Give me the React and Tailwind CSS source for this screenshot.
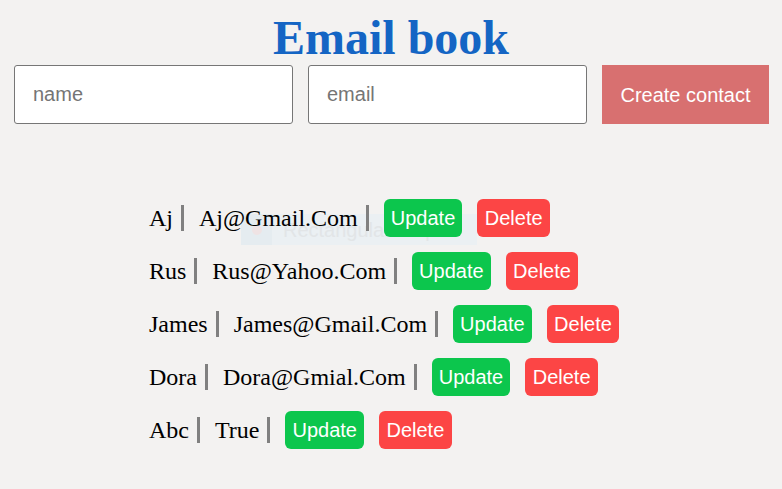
import React, { useState } from 'react'

const initialContacts = [
  { name: 'Aj', email: 'Aj@Gmail.Com' },
  { name: 'Rus', email: 'Rus@Yahoo.Com' },
  { name: 'James', email: 'James@Gmail.Com' },
  { name: 'Dora', email: 'Dora@Gmial.Com' },
  { name: 'Abc', email: 'True' },
]

const ContactRow = ({ contact, onDelete }) => {
  return (
    <div className="flex items-center gap-[15px] h-[38px]">
      <span className="text-[24px] leading-[26px] pr-2 border-r-[3px] border-[#808080] text-black">
        {contact.name}
      </span>
      <span className="text-[24px] leading-[26px] pr-2 border-r-[3px] border-[#808080] text-black">
        {contact.email}
      </span>
      <button className="h-[38px] px-[7px] rounded-md bg-[#0cc64d] text-white text-[20px] font-['Liberation_Sans',Arial,sans-serif]">
        Update
      </button>
      <button
        onClick={onDelete}
        className="h-[38px] px-[7.5px] rounded-md bg-[#fc4545] text-white text-[20px] font-['Liberation_Sans',Arial,sans-serif]"
      >
        Delete
      </button>
    </div>
  )
}

export default function App() {
  const [contacts, setContacts] = useState(initialContacts)
  const [name, setName] = useState('')
  const [email, setEmail] = useState('')

  const handleCreate = () => {
    if (!name.trim()) return
    setContacts([...contacts, { name: name.trim(), email: email.trim() }])
    setName('')
    setEmail('')
  }

  return (
    <div className="relative isolate min-h-[489px] w-full bg-[#f3f2f1] font-['Liberation_Serif','Times_New_Roman',serif]">
      {/* faint snipping tool ghost left in the screenshot */}
      <div className="absolute -z-10 left-[241px] top-[214px] w-[236px] h-[31px] bg-[#ebf0f3] flex items-center">
        <div className="w-[31px] h-[31px] bg-[#e5ecf0] flex items-center justify-center">
          <div className="w-[10px] h-[10px] rounded-full bg-[#efe3e4]" />
        </div>
        <span className="ml-[11px] text-[20px] text-[#e2e5e7] font-['Liberation_Sans',Arial,sans-serif]">
          Rectangular Snip
        </span>
      </div>

      <h1 className="pt-[11px] text-center text-[48px] leading-[53px] font-bold text-[#1465c4]">
        Email book
      </h1>

      <div className="mt-px flex gap-[15px] pl-[14px] pr-[13px]">
        <input
          type="text"
          value={name}
          onChange={(e) => setName(e.target.value)}
          placeholder="name"
          className="w-[279px] h-[59px] bg-white border border-[#767676] rounded-[3px] pl-[18px] text-[20px] font-['Liberation_Sans',Arial,sans-serif] placeholder:text-[#757575] outline-none"
        />
        <input
          type="text"
          value={email}
          onChange={(e) => setEmail(e.target.value)}
          placeholder="email"
          className="w-[279px] h-[59px] bg-white border border-[#767676] rounded-[3px] pl-[18px] text-[20px] font-['Liberation_Sans',Arial,sans-serif] placeholder:text-[#757575] outline-none"
        />
        <button
          onClick={handleCreate}
          className="w-[167px] h-[59px] bg-[#d87070] text-white text-[20px] font-['Liberation_Sans',Arial,sans-serif]"
        >
          Create contact
        </button>
      </div>

      <div className="mt-[75px] pl-[149px] flex flex-col gap-[15px]">
        {contacts.map((c, i) => (
          <ContactRow
            key={i}
            contact={c}
            onDelete={() => setContacts(contacts.filter((_, j) => j !== i))}
          />
        ))}
      </div>
    </div>
  )
}
